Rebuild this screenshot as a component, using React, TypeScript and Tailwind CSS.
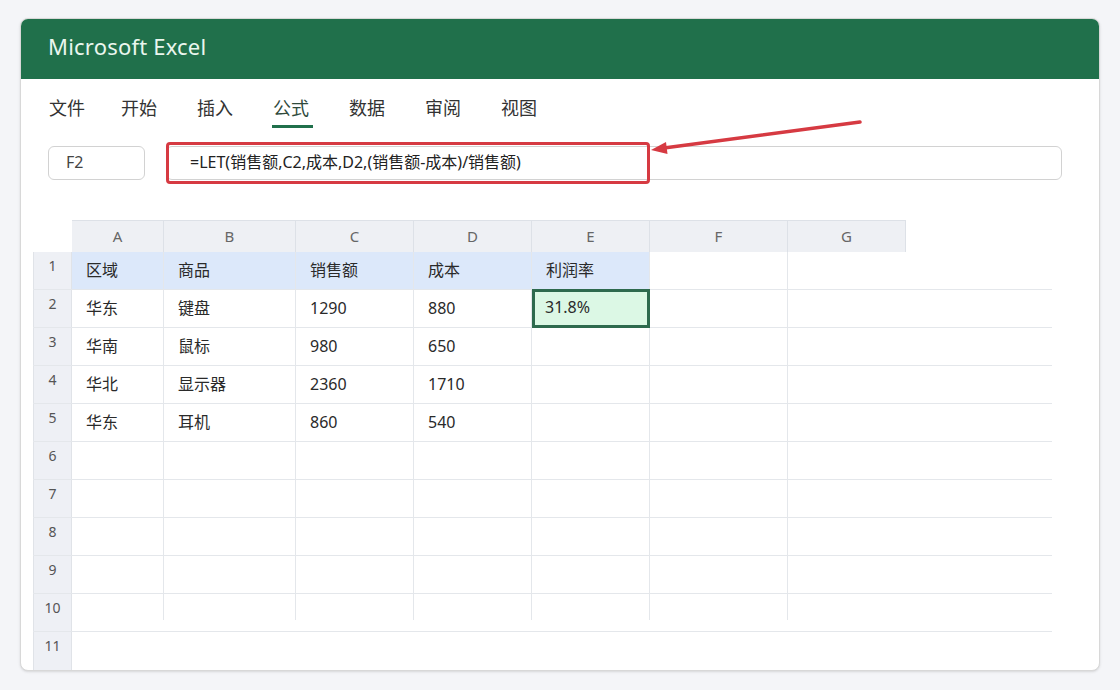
import React from 'react';

const tabs = ['文件', '开始', '插入', '公式', '数据', '审阅', '视图'];

const cols = [
  { key: 'A', w: 'w-[92px]' },
  { key: 'B', w: 'w-[132px]' },
  { key: 'C', w: 'w-[118px]' },
  { key: 'D', w: 'w-[118px]' },
  { key: 'E', w: 'w-[118px]' },
  { key: 'F', w: 'w-[138px]' },
  { key: 'G', w: 'w-[118px]' },
];

const data: string[][] = [
  ['区域', '商品', '销售额', '成本', '利润率'],
  ['华东', '键盘', '1290', '880', '31.8%'],
  ['华南', '鼠标', '980', '650', ''],
  ['华北', '显示器', '2360', '1710', ''],
  ['华东', '耳机', '860', '540', ''],
];

function Cell({ w, row, col, text }: { w: string; row: number; col: number; text: string }) {
  const isHead = row === 1 && col < 5;
  const isSel = row === 2 && col === 4;
  const short = row === 10;
  const noLine = col === 6;

  if (isSel) {
    return (
      <div className={`${w} h-[39px] -mt-px flex items-center pl-[10px] pb-[3px] border-[3px] border-[#2e6a4e] bg-[#dcf8e5] text-[16px] text-[#2a2a2a]`}>
        {text}
      </div>
    );
  }

  return (
    <div className={`${w} h-full flex items-center pl-[14px] pb-[2px] text-[16px] text-[#2a2a2a] ${isHead ? 'bg-[#dce8fa]' : ''} ${short || noLine ? '' : 'border-r border-[#e4e7eb]'} relative`}>
      {short && !noLine && <div className="absolute right-0 top-0 h-[26px] w-px bg-[#e4e7eb]" />}
      {text}
    </div>
  );
}

export default function App() {
  return (
    <div className="min-h-[690px] bg-[#f4f5f8] pt-[18px] pl-[20px] font-['Noto_Sans','Noto_Sans_CJK_SC',sans-serif]">
      <div className="relative w-[1080px] h-[653px] bg-white rounded-lg border border-[#d8d8d8] overflow-hidden shadow-sm">
        {/* 标题栏 */}
        <div className="h-[60px] bg-[#20704b] flex items-center pl-[27px] pb-[5px]">
          <span className="text-[22px] text-[#eaf6ee] tracking-[0.2px]">Microsoft Excel</span>
        </div>

        {/* 菜单 */}
        <div className="flex items-start pl-[28px] pt-[17px] h-[49px]">
          {tabs.map((t, i) => (
            <div key={t} className={`flex flex-col ${i === 0 ? 'w-[72px]' : 'w-[76px]'}`}>
              <span className={`text-[18px] leading-[24px] ${t === '公式' ? 'text-[#2f4a3c]' : 'text-[#333]'}`}>{t}</span>
              {t === '公式' && <div className="mt-[5px] -ml-px h-[3px] w-[41px] bg-[#20704b]" />}
            </div>
          ))}
        </div>

        {/* 编辑栏 */}
        <div className="flex gap-[21px] pl-[27px] pr-[37px] mt-[18px]">
          <div className="w-[97px] h-[34px] rounded-md border-[1.5px] border-[#d2d2d2] flex items-center pl-[17px] pb-[3px] text-[16px] text-[#444]">
            F2
          </div>
          <div className="flex-1 h-[34px] rounded-md border-[1.5px] border-[#d2d2d2] flex items-center pl-[23px] pb-[3px] text-[16px] text-[#222]">
            =LET(销售额,C2,成本,D2,(销售额-成本)/销售额)
          </div>
        </div>

        {/* 表格 */}
        <div className="ml-[12px] w-[1019px] mt-[40px]">
          <div className="flex h-[32px]">
            <div className="w-[39px]" />
            {cols.map((c) => (
              <div key={c.key} className={`${c.w} h-full bg-[#eef0f4] border-t border-r border-[#dde1e7] first:border-l flex items-center justify-center text-[15px] text-[#666]`}>
                {c.key}
              </div>
            ))}
          </div>

          {Array.from({ length: 11 }, (_, r) => r + 1).map((row) => (
            <div key={row} className={`flex h-[38px] ${row < 11 ? 'border-b' : ''} border-t-0 border-[#e4e7eb] ${row === 1 ? 'border-t border-t-[#dde1e7]' : ''}`}>
              <div className="w-[39px] h-full bg-[#eef0f5] border-l border-r border-[#e0e3e8] flex justify-center pt-[3px] text-[14px] text-[#555]">
                {row}
              </div>
              {row < 11 &&
                cols.map((c, ci) => (
                  <Cell key={c.key} w={c.w} row={row} col={ci} text={data[row - 1]?.[ci] ?? ''} />
                ))}
            </div>
          ))}
        </div>

        {/* 标注 */}
        <div className="absolute left-[145px] top-[123px] w-[484px] h-[42px] rounded-[4px] border-[3px] border-[#d63a42]" />
        <svg className="absolute left-[619px] top-[91px]" width="230" height="55" viewBox="0 0 230 55">
          <line x1="220" y1="12" x2="24" y2="38" stroke="#d63a42" strokeWidth="3.5" strokeLinecap="round" />
          <polygon points="11,40 27.5,44 26,32" fill="#d63a42" />
        </svg>
      </div>
    </div>
  );
}
